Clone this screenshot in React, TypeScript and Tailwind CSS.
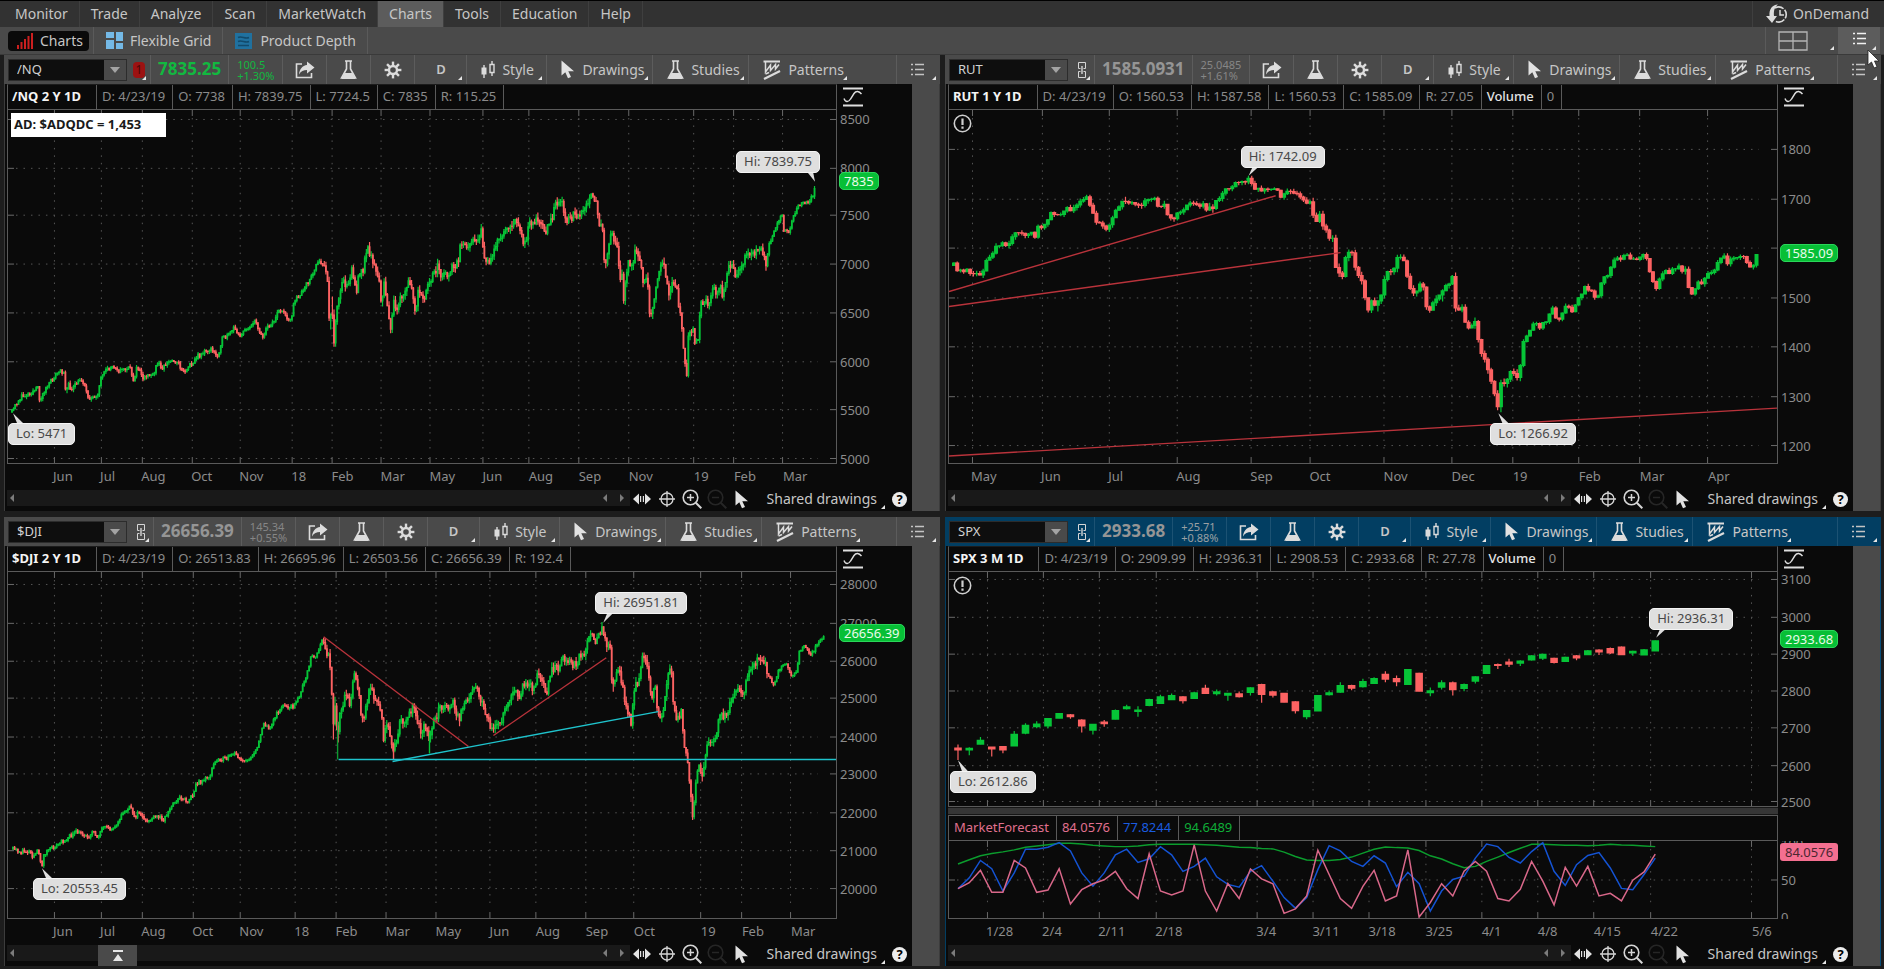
import type { ReactNode } from "react";

type Point = [number, number];

interface Label {
  at: number;
  text: string;
}

interface Callout {
  text: string;
  x: number;
  y: number;
  tip: Point;
}

interface TrendLine {
  from: Point;
  to: Point;
  color: string;
}

interface Bar {
  x: number;
  open: number;
  close: number;
  high: number;
  low: number;
}

const PLOT_WIDTH = 829;
const UP = "#06c437";
const DOWN = "#fc6262";
const RED_LINE = "#b9333b";
const CYAN_LINE = "#1fc3cc";

// price path of every chart as x,y pairs on the plot
const NQ_PATH =
  "4,303 8,295 13,288 20,285 30,279 32,292 36,282 43,272 50,263 56,262 58,284 60,275 64,281 68,275 74,270 78,280 81,289 85,290 90,283 93,270 98,262 103,258 108,257 111,262 116,260 122,259 126,272 128,260 132,260 135,272 140,265 146,267 149,253 155,258 160,253 166,251 171,255 176,263 180,258 190,247 196,243 203,240 210,247 214,230 220,227 226,219 233,226 240,218 248,212 252,222 255,227 260,217 268,210 270,200 276,203 283,212 286,195 290,187 295,183 300,173 305,165 309,155 313,153 319,162 321,190 322,220 324,187 326,234 329,203 331,193 335,172 340,175 344,158 349,183 351,168 356,158 359,140 361,140 364,148 366,153 369,167 372,170 374,197 376,173 380,197 383,217 386,193 389,205 393,190 398,182 402,170 405,187 407,203 411,183 416,193 421,177 426,162 430,157 433,165 440,165 445,158 450,155 453,138 458,138 465,127 468,131 472,125 474,123 476,145 480,153 486,147 490,130 493,128 498,117 505,118 509,112 512,115 515,132 519,127 521,115 526,109 531,113 538,120 543,113 548,97 551,89 555,93 559,112 563,108 568,102 571,108 578,97 585,87 589,93 591,112 596,120 597,153 600,145 603,122 606,130 610,140 612,167 615,163 616,191 619,163 622,150 625,160 629,137 633,153 636,173 640,163 642,203 646,198 648,183 651,167 656,148 659,170 662,190 665,173 669,177 672,200 675,220 677,243 680,266 681,223 686,217 688,233 691,228 693,198 698,192 701,195 706,175 710,188 713,177 716,187 720,163 725,155 728,167 733,157 738,148 745,143 754,138 759,152 762,135 768,120 775,105 777,122 782,123 786,108 790,98 796,93 803,90 807,83 809,72";

const DJI_PATH =
  "5,278 13,281 23,280 25,286 29,280 32,286 34,295 36,283 41,278 48,275 53,271 61,266 68,261 75,263 80,266 84,261 89,265 95,257 105,258 111,248 116,241 122,236 127,245 132,241 137,251 143,248 150,245 156,248 161,240 166,231 173,226 180,230 185,223 188,213 195,209 202,205 206,193 211,187 218,188 226,182 233,187 237,191 243,185 249,179 252,165 256,151 261,158 265,150 270,141 275,134 286,135 290,128 295,115 299,105 303,85 308,85 312,78 315,66 318,81 322,86 324,111 325,168 327,125 330,171 332,145 336,135 338,118 342,131 347,100 351,121 354,151 358,138 363,113 368,131 374,138 376,168 380,151 386,178 390,171 392,151 398,151 405,136 410,148 414,168 417,153 422,171 425,151 433,135 440,136 445,130 451,148 456,138 461,125 465,114 470,115 473,128 476,138 480,145 483,155 487,160 490,151 494,151 496,138 500,131 506,121 512,125 518,108 525,115 531,103 539,120 545,96 550,98 555,85 563,91 569,92 572,85 577,83 582,63 588,71 595,56 599,70 603,73 605,120 607,111 610,100 615,108 617,125 620,138 624,151 627,120 632,105 636,83 640,91 644,125 648,113 650,141 654,150 656,138 660,108 664,96 666,131 670,151 674,141 677,171 680,181 683,215 686,248 688,211 692,191 695,210 698,185 702,168 708,168 713,145 720,143 725,128 731,115 736,121 743,98 751,86 758,90 762,105 767,114 771,101 778,91 785,106 790,98 792,81 798,73 804,83 810,73 817,65";

const RUT_PATH =
  "5,156 9,163 13,161 19,159 24,167 29,162 33,167 35,155 40,147 47,137 54,135 57,138 62,128 70,121 74,126 85,125 87,127 89,115 92,120 99,110 104,102 109,104 119,100 127,98 132,93 137,86 140,95 144,100 146,110 152,115 157,118 160,115 165,107 170,97 175,87 179,93 184,95 192,99 199,89 207,89 210,98 215,91 220,107 224,112 229,103 237,98 245,93 254,95 257,102 260,93 263,103 267,93 272,90 275,79 282,78 289,74 295,72 302,69 305,76 310,80 320,80 329,79 332,86 339,83 343,79 347,85 354,86 356,93 361,93 364,100 367,110 371,105 375,117 377,123 384,128 386,150 389,165 394,167 398,140 403,143 405,153 410,167 415,173 418,202 423,188 427,202 430,193 434,180 438,165 444,163 449,150 455,147 458,163 462,177 467,187 472,175 476,177 479,203 484,193 490,187 493,192 495,175 502,172 505,163 507,197 514,200 516,213 522,217 525,210 527,213 530,230 533,247 538,248 540,263 545,277 547,293 551,303 552,273 557,270 564,263 567,260 569,272 572,257 574,237 579,223 584,217 589,215 591,220 595,215 600,207 604,198 607,208 612,210 617,198 624,202 630,190 637,178 644,180 646,188 651,183 654,170 660,167 665,152 672,148 680,143 684,150 690,149 697,143 699,155 703,167 706,177 710,177 713,163 722,162 730,156 735,165 739,157 741,184 745,182 749,175 754,175 759,163 767,159 774,148 777,148 780,157 784,148 797,147 799,155 806,158 809,145";

// SPX bars: direction, body top, body bottom, high, low (three units a pixel)
const SPX_BARS: [string, number, number, number, number][] = [
  ["d", 716, 722, 706, 752], ["u", 717, 722, 714, 738], ["u", 693, 705, 683, 705], ["d", 713, 719, 713, 742],
  ["d", 712, 722, 712, 732], ["u", 675, 710, 665, 710], ["u", 648, 672, 642, 675], ["u", 644, 652, 636, 657],
  ["u", 627, 650, 627, 657], ["u", 612, 627, 612, 627], ["d", 616, 622, 614, 628], ["d", 632, 650, 630, 670],
  ["u", 645, 663, 645, 676], ["d", 638, 643, 632, 652], ["u", 603, 630, 600, 630], ["u", 592, 598, 586, 600],
  ["u", 602, 606, 590, 622], ["u", 570, 588, 568, 590], ["u", 562, 582, 556, 582], ["u", 558, 571, 552, 571],
  ["d", 562, 574, 560, 582], ["u", 550, 567, 547, 567], ["d", 536, 552, 526, 552], ["u", 547, 553, 540, 558],
  ["u", 551, 557, 551, 574], ["d", 553, 562, 546, 564], ["u", 535, 549, 533, 558], ["d", 525, 555, 523, 580],
  ["d", 547, 557, 545, 564], ["d", 551, 578, 551, 578], ["d", 577, 604, 575, 612], ["u", 603, 622, 603, 630],
  ["u", 558, 605, 557, 605], ["u", 550, 556, 543, 558], ["u", 528, 548, 518, 550], ["d", 528, 536, 526, 542],
  ["u", 516, 532, 508, 534], ["u", 507, 522, 503, 522], ["d", 494, 509, 485, 518], ["d", 507, 517, 498, 530],
  ["u", 480, 525, 478, 525], ["d", 491, 545, 490, 545], ["u", 544, 550, 534, 560], ["u", 520, 533, 512, 540],
  ["d", 520, 541, 516, 558], ["u", 525, 537, 522, 545], ["u", 502, 515, 500, 522], ["u", 468, 492, 466, 492],
  ["d", 465, 468, 462, 478], ["d", 457, 464, 447, 472], ["u", 454, 461, 452, 469], ["u", 438, 451, 437, 453],
  ["u", 434, 446, 432, 451], ["d", 446, 459, 444, 462], ["u", 443, 456, 441, 456], ["d", 438, 445, 436, 452],
  ["u", 423, 435, 421, 436], ["d", 421, 427, 419, 436], ["d", 416, 430, 413, 433], ["d", 412, 435, 410, 436],
  ["u", 425, 430, 423, 438], ["u", 420, 436, 418, 436], ["u", 393, 424, 392, 424],
];

const FORECAST = [
  {
    color: "#d9688a",
    values: [1138, 1120, 1082, 1149, 1149, 1052, 1075, 1149, 1142, 1077, 1184, 1141, 1123, 1111, 1085, 1138, 1168, 1032, 1145, 1157, 1145, 1005, 1145, 1206, 1122, 1168, 1078, 1108, 1123, 1213, 1199, 1160, 1021, 1095, 1168, 1198, 1131, 1082, 1175, 1160, 1020, 1224, 1180, 1123, 1160, 1085, 1055, 1085, 1168, 1175, 1140, 1055, 1115, 1187, 1073, 1130, 1070, 1160, 1152, 1175, 1112, 1087, 1033],
  },
  {
    color: "#1453d3",
    values: [1138, 1105, 1052, 1077, 1145, 1090, 1018, 1018, 1012, 998, 1023, 1090, 1130, 1090, 1035, 1018, 1058, 1047, 1010, 1035, 1085, 1070, 1045, 1102, 1125, 1133, 1085, 1068, 1115, 1165, 1197, 1165, 1080, 1007, 1023, 1055, 1070, 1038, 1060, 1132, 1088, 1123, 1206, 1145, 1110, 1100, 1045, 1002, 1010, 1043, 1060, 1025, 998, 1085, 1128, 1065, 1037, 1028, 1075, 1137, 1141, 1095, 1045],
  },
  {
    color: "#0b9c2d",
    values: [1063, 1050, 1038, 1031, 1026, 1020, 1012, 1008, 1004, 1000, 1000, 1002, 1006, 1008, 1010, 1010, 1008, 1004, 1003, 1003, 1003, 1003, 1004, 1006, 1009, 1012, 1013, 1016, 1017, 1027, 1040, 1051, 1052, 1052, 1049, 1042, 1030, 1018, 1011, 1013, 1014, 1022, 1038, 1048, 1062, 1074, 1070, 1055, 1042, 1028, 1015, 1003, 1003, 1004, 1006, 1006, 1007, 1006, 1003, 1005, 1006, 1008, 1010],
  },
];

function parsePath(path: string): Point[] {
  return path.split(" ").map((pair) => pair.split(",").map(Number) as Point);
}

function heightAt(points: Point[], x: number) {
  for (let i = 1; i < points.length; i++) {
    const [x0, y0] = points[i - 1];
    const [x1, y1] = points[i];
    if (x <= x1) return y0 + ((y1 - y0) * (x - x0)) / (x1 - x0);
  }
  return points[points.length - 1][1];
}

// Daily bars along a price path, with a repeatable jitter
function makeBars(path: string, step: number, calm: number, rough: number, from: number, to = 760): Bar[] {
  const points = parsePath(path);
  const end = points[points.length - 1][0];
  let seed = 11;
  const random = () => {
    seed = (seed * 16807) % 2147483647;
    return seed / 2147483647;
  };
  const bars: Bar[] = [];
  let open = points[0][1];
  for (let x = points[0][0]; x <= end; x += step) {
    const size = x > from && x < to ? rough : calm;
    const close = heightAt(points, x) + (random() - 0.5) * size;
    // turning points that fall between two bars still reach the wick
    const passed = points.filter((p) => p[0] > x - step && p[0] <= x).map((p) => p[1]);
    bars.push({
      x,
      open,
      close,
      high: Math.min(open - random() * size * 0.6, close - random() * size * 0.6, ...passed),
      low: Math.max(open + random() * size * 0.6, close + random() * size * 0.6, ...passed),
    });
    open = close;
  }
  return bars;
}

const nqBars = makeBars(NQ_PATH, 1.62, 4.5, 9, 316);
const djiBars = makeBars(DJI_PATH, 1.62, 4, 9, 316);
const rutBars = makeBars(RUT_PATH, 3.24, 5, 7, 360, 570);
const spxBars = SPX_BARS.map(([dir, top, bottom, high, low], i) => ({
  x: 9 + i * 11.26,
  open: (dir === "u" ? bottom : top) / 3 - 62,
  close: (dir === "u" ? top : bottom) / 3 - 62,
  high: high / 3 - 62,
  low: low / 3 - 62,
}));

function labels(text: string): Label[] {
  return text.split(" ").map((part) => {
    const [name, at] = part.split(":");
    return { text: name, at: Number(at) };
  });
}

/* ---------- icons ---------- */

function ShareIcon() {
  return (
    <svg width="20" height="18" viewBox="0 0 20 18" fill="none" aria-hidden="true">
      <path d="M7 3H1.500v13.500h15V12" stroke="#dcdcdc" strokeWidth="1.6" />
      <path d="M12 0.500 19.500 6.500 12 12.500V9C8.500 9 6 10 4 13.500 4.500 8 7.500 4.500 12 4Z" fill="#dcdcdc" />
    </svg>
  );
}

function FlaskIcon() {
  return (
    <svg width="17" height="20" viewBox="0 0 17 20" fill="none" aria-hidden="true">
      <path d="M5 1h7M6.500 1v8L1.500 18h14L10.500 9V1" stroke="#dcdcdc" strokeWidth="1.6" />
      <path d="M4.500 13h8l3 6H1.500Z" fill="#dcdcdc" />
    </svg>
  );
}

function GearIcon() {
  return (
    <svg width="18" height="18" viewBox="0 0 18 18" fill="none" stroke="#dcdcdc" aria-hidden="true">
      <circle cx="9" cy="9" r="4" strokeWidth="2.4" />
      {[0, 45, 90, 135, 180, 225, 270, 315].map((a) => (
        <path key={a} d="M9 0.600V4.500" strokeWidth="2.4" transform={`rotate(${a} 9 9)`} />
      ))}
    </svg>
  );
}

function CandlesIcon() {
  return (
    <svg width="14" height="17" viewBox="0 0 14 17" fill="none" stroke="#dcdcdc" aria-hidden="true">
      <path d="M3 4v13M11 0v3M11 12v3" strokeWidth="1.4" />
      <path d="M0.500 6.500h5v7h-5Z" fill="#dcdcdc" stroke="none" />
      <path d="M9 3.500h4v8H9Z" strokeWidth="1.4" />
    </svg>
  );
}

function PointerIcon() {
  return (
    <svg width="14" height="19" viewBox="0 0 14 19" aria-hidden="true">
      <path d="M0.500 0.500V15.500L4.300 12.200 7 18.300 10 17 7.300 11.200H13Z" fill="#e2e2e2" />
    </svg>
  );
}

function PatternsIcon() {
  return (
    <svg width="18" height="20" viewBox="0 0 18 20" fill="none" stroke="#dcdcdc" aria-hidden="true">
      <path d="M0.500 1.500H17" strokeWidth="2" />
      <path d="M2.500 2v10L7.500 5v5.500L12.500 4.500V9L16 4.500" strokeWidth="1.5" />
      <path d="M1 19 17 11" strokeWidth="2.200" />
      <path d="M2.500 14 6 12.500" strokeWidth="1.5" />
    </svg>
  );
}

function ListIcon({ color = "#c4c4c4" }: { color?: string }) {
  return (
    <svg width="13" height="13" viewBox="0 0 13 13" fill="none" stroke={color} aria-hidden="true">
      <path d="M0 1.500h2M0 6.500h2M0 11.500h2M4 1.500h9M4 6.500h9M4 11.500h9" strokeWidth="1.4" />
    </svg>
  );
}

function LinkIcon() {
  return (
    <svg width="8" height="16" viewBox="0 0 8 16" fill="none" stroke="#d6d6d6" aria-hidden="true">
      <path d="M2.500 6.500H0.500V0.500h7v6H5.500M2.500 9.500H0.500v6h7v-6H5.500" />
      <path d="M4 4v8" strokeWidth="1.4" />
    </svg>
  );
}

function ScaleIcon() {
  return (
    <svg width="20" height="20" viewBox="0 0 20 20" fill="none" stroke="#dedede" aria-hidden="true">
      <path d="M0 1.500h20M0 18.500h20" strokeWidth="2.200" />
      <path d="M1 11.500c1.500 4 4.500 4 6.500 0.500l3.500-5.500c2-3 5-2.500 7.500 0.500" strokeWidth="1.4" />
    </svg>
  );
}

function AlertIcon() {
  return (
    <svg width="19" height="19" viewBox="0 0 19 19" fill="none" stroke="#cfcfcf" aria-hidden="true">
      <circle cx="9.500" cy="9.500" r="8.200" strokeWidth="1.6" />
      <path d="M9.500 4.500v6.500M9.500 12.500v2.200" strokeWidth="2.200" />
    </svg>
  );
}

function SpreadIcon() {
  return (
    <svg width="18" height="12" viewBox="0 0 18 12" aria-hidden="true">
      <path d="M0 6 6 0.500v11ZM18 6 12 0.500v11ZM7 3h1.200v6H7ZM9.800 3H11v6H9.800Z" fill="#e2e2e2" />
    </svg>
  );
}

function CrosshairIcon() {
  return (
    <svg width="16" height="16" viewBox="0 0 16 16" fill="none" stroke="#d6d6d6" aria-hidden="true">
      <circle cx="8" cy="8" r="6" strokeWidth="1.3" />
      <path d="M8 0v16M0 8h16" strokeWidth="1.3" />
    </svg>
  );
}

function ZoomIcon({ sign, color }: { sign: string; color: string }) {
  return (
    <svg width="20" height="20" viewBox="0 0 20 20" fill="none" stroke={color} aria-hidden="true">
      <circle cx="8.500" cy="8.500" r="7.300" strokeWidth="1.6" />
      <path d={sign} strokeWidth="1.5" />
      <path d="m13.800 13.800 5.500 5.500" strokeWidth="2" />
    </svg>
  );
}

function HelpIcon() {
  return (
    <span className="flex h-[15px] w-[15px] items-center justify-center rounded-full bg-[#ececec] text-[13px] leading-none font-bold text-black">
      ?
    </span>
  );
}

function Corner() {
  return (
    <svg className="absolute right-1 bottom-1" width="4" height="4" viewBox="0 0 4 4" aria-hidden="true">
      <path d="M4 0v4H0Z" fill="#e6e6e6" />
    </svg>
  );
}

/* ---------- toolbar ---------- */

interface ToolProps {
  label: string;
  width: string;
  icon?: ReactNode;
  text?: string;
  menu?: boolean;
  line: string;
}

function Tool({ label, width, icon, text, menu, line }: ToolProps) {
  return (
    <button
      type="button"
      aria-label={label}
      className={`relative flex h-full shrink-0 items-center border-l ${line} ${width} ${text ? "gap-[7px] pl-[14px]" : "justify-center"}`}
    >
      {icon}
      {text && <span>{text}</span>}
      {menu && <Corner />}
    </button>
  );
}

interface ToolbarProps {
  symbol: string;
  price: string;
  change: string;
  percent: string;
  live?: boolean;
  active?: boolean;
}

function Toolbar({ symbol, price, change, percent, live, active }: ToolbarProps) {
  const line = active ? "border-[#1c5273]" : "border-[#5c5c5c]";
  return (
    <div className={`flex h-[29px] items-center overflow-hidden pl-1 text-sm text-[#c6c6c6] ${active ? "bg-[#023e62]" : "bg-[#4a4a4a]"}`}>
      <div className="flex h-[22px] w-[119px] shrink-0 border border-[#2c2c2c] bg-[#0e0e0e]">
        <input
          aria-label={`Symbol ${symbol}`}
          defaultValue={symbol}
          className="min-w-0 flex-1 bg-transparent pl-2 text-[13px] text-[#d2d2d2] outline-none"
        />
        <button type="button" aria-label={`Choose symbol ${symbol}`} className="flex w-[22px] items-center justify-center bg-[#4a4a4a]">
          <svg width="10" height="6" viewBox="0 0 10 6" aria-hidden="true">
            <path d="M0 0h10L5 6Z" fill="#a4a4a4" />
          </svg>
        </button>
      </div>
      <button type="button" aria-label={`Link ${symbol}`} className={`relative flex h-full shrink-0 items-center ${live ? "w-[23px] pl-[6px]" : "w-[26px] pl-[10px]"}`}>
        {live ? (
          <span className="flex h-4 w-3 items-center justify-center rounded-sm bg-[#9c1212] text-xs leading-none text-[#4a0606]">1</span>
        ) : (
          <LinkIcon />
        )}
        <Corner />
      </button>
      <span className={`flex h-full shrink-0 items-center border-l px-[7px] text-[17px] font-bold ${line} ${live ? "text-[#12b840]" : "text-[#959595]"}`}>
        {price}
      </span>
      <span className={`flex h-full shrink-0 flex-col justify-center border-l px-2 text-[11px] leading-[11px] ${line} ${live ? "text-[#12b840]" : active ? "text-[#9aa0a4]" : "text-[#868686]"}`}>
        <span>{change}</span>
        <span>{percent}</span>
      </span>
      <Tool label="Share" width="w-11" icon={<ShareIcon />} line={line} />
      <Tool label="Edit studies" width="w-11" icon={<FlaskIcon />} line={line} />
      <Tool label="Chart settings" width="w-11" icon={<GearIcon />} line={line} />
      <Tool label="Time frame" width="w-[52px]" icon={<span className="text-[13px] font-semibold">D</span>} menu line={line} />
      <Tool label="Style" width="w-20" icon={<CandlesIcon />} text="Style" menu line={line} />
      <Tool label="Drawings" width="w-[106px]" icon={<PointerIcon />} text="Drawings" menu line={line} />
      <Tool label="Studies" width="w-24" icon={<FlaskIcon />} text="Studies" menu line={line} />
      <Tool label="Patterns" width="w-[103px]" icon={<PatternsIcon />} text="Patterns" menu line={line} />
      <button type="button" aria-label="Panel menu" className={`relative ml-auto flex h-full w-11 shrink-0 items-center border-l pl-[14px] ${line}`}>
        <ListIcon />
        <Corner />
      </button>
    </div>
  );
}

/* ---------- chart parts ---------- */

function InfoRow({ title, values, volume }: { title: string; values: string[]; volume?: boolean }) {
  const cell = "flex items-center border-r border-[#5a5a5a] pr-[7px] pl-[5px]";
  return (
    <div className="flex h-[26px] min-w-0 flex-1 overflow-hidden border border-[#5a5a5a] border-t-[#1c1c1c] text-[13px] whitespace-nowrap text-[#8a8a8a]">
      <h2 className="flex items-center border-r border-[#5a5a5a] pr-[15px] pl-1 font-bold text-[#f4f4f4]">{title}</h2>
      {values.map((value) => (
        <span key={value} className={cell}>
          {value}
        </span>
      ))}
      {volume && (
        <>
          <span className={`${cell} font-medium text-[#e4e4e4]`}>Volume</span>
          <span className={cell}>0</span>
        </>
      )}
    </div>
  );
}

function Grid({ times, levels, height }: { times: Label[]; levels: Label[]; height: number }) {
  return (
    <g fill="none">
      <g stroke="#565656" strokeWidth="1" strokeDasharray="1.500 6">
        {times.map((t) => (
          <path key={t.at} d={`M${t.at}.5 8V${height - 14}`} />
        ))}
        {levels.map((l) => (
          <path key={l.at} d={`M8 ${l.at}.5H811`} />
        ))}
      </g>
      <g stroke="#6a6a6a" strokeWidth="1">
        {times.map((t) => (
          <path key={t.at} d={`M${t.at}.5 0v6M${t.at}.5 ${height - 6}v6`} />
        ))}
        {levels.map((l) => (
          <path key={l.at} d={`M0 ${l.at}.5h6M823 ${l.at}.5h6`} />
        ))}
      </g>
    </g>
  );
}

function Bars({ bars, width }: { bars: Bar[]; width: number }) {
  const up = bars.filter((b) => b.close <= b.open);
  const down = bars.filter((b) => b.close > b.open);
  const wicks = (list: Bar[]) => list.map((b) => `M${b.x.toFixed(1)} ${b.high.toFixed(1)}V${b.low.toFixed(1)}`).join("");
  const bodies = (list: Bar[]) =>
    list.map((b) => `M${b.x.toFixed(1)} ${(Math.min(b.open, b.close) - 0.5).toFixed(1)}V${(Math.max(b.open, b.close) + 0.5).toFixed(1)}`).join("");
  return (
    <g fill="none">
      <path d={wicks(down)} stroke={DOWN} strokeWidth="1.2" />
      <path d={wicks(up)} stroke={UP} strokeWidth="1.2" />
      <path d={bodies(up)} stroke={UP} strokeWidth={width} />
      <path d={bodies(down)} stroke={DOWN} strokeWidth={width} />
    </g>
  );
}

function CalloutBox({ callout }: { callout: Callout }) {
  return (
    <span
      className="absolute flex h-[22px] items-center rounded-[5px] border border-[#f4f4f4] bg-[#dfdfdf] px-[7px] text-[13px] whitespace-nowrap text-[#484848]"
      style={{ left: `${(callout.x / PLOT_WIDTH) * 100}%`, top: callout.y }}
    >
      {callout.text}
    </span>
  );
}

function CalloutTail({ callout }: { callout: Callout }) {
  const [tx, ty] = callout.tip;
  const below = ty > callout.y;
  const edge = below ? callout.y + 21 : callout.y + 1;
  const lean = tx < callout.x + 40 ? 4 : -8;
  return <path d={`M${tx} ${ty}L${tx + lean} ${edge}H${tx + lean + 6}Z`} fill="#dfdfdf" />;
}

function AxisLabels({ levels }: { levels: Label[] }) {
  return (
    <>
      {levels.map((l) => (
        <span key={l.at} className="absolute left-[3px] -translate-y-1/2 text-[13px] leading-4 text-[#8c8c8c]" style={{ top: l.at }}>
          {l.text}
        </span>
      ))}
    </>
  );
}

interface PlotProps {
  height: number;
  times: Label[];
  levels: Label[];
  bars: Bar[];
  barWidth: number;
  lines?: TrendLine[];
  callouts: Callout[];
  badge: Label;
  children?: ReactNode;
}

function Plot({ height, times, levels, bars, barWidth, lines = [], callouts, badge, children }: PlotProps) {
  return (
    <div className="flex" style={{ height }}>
      <div className="relative min-w-0 flex-1 border-r border-b border-l border-[#5a5a5a]">
        <svg className="absolute inset-0 h-full w-full" viewBox={`0 0 ${PLOT_WIDTH} ${height}`} preserveAspectRatio="none" role="img" aria-label="Price chart">
          <Grid times={times} levels={levels} height={height} />
          <Bars bars={bars} width={barWidth} />
          {lines.map((line) => (
            <path key={line.from.join()} d={`M${line.from.join(" ")}L${line.to.join(" ")}`} stroke={line.color} strokeWidth="1.4" />
          ))}
          {callouts.map((c) => (
            <CalloutTail key={c.text} callout={c} />
          ))}
        </svg>
        {callouts.map((c) => (
          <CalloutBox key={c.text} callout={c} />
        ))}
        {children}
      </div>
      <div className="relative w-[75px]">
        <AxisLabels levels={levels} />
        <span
          className="absolute left-[2px] flex h-[18px] -translate-y-1/2 items-center rounded-[5px] border border-[#2bd65a] bg-[#07bf36] px-1 text-[13px] leading-none text-[#eafbea]"
          style={{ top: badge.at }}
        >
          {badge.text}
        </span>
      </div>
    </div>
  );
}

function TimeAxis({ times }: { times: Label[] }) {
  return (
    <div className="mr-[75px] h-[26px]">
      <div className="relative h-full text-[13px] text-[#8c8c8c]">
        {times.map((t) => (
          <span key={t.at} className="absolute top-[3px] leading-[18px]" style={{ left: `${(t.at / PLOT_WIDTH) * 100}%` }}>
            {t.text}
          </span>
        ))}
      </div>
    </div>
  );
}

function Arrow({ flip }: { flip?: boolean }) {
  return (
    <svg width="4" height="8" viewBox="0 0 4 8" aria-hidden="true">
      <path d={flip ? "M0 0v8L4 4Z" : "M4 0v8L0 4Z"} fill="#7c7c7c" />
    </svg>
  );
}

function BottomBar({ dock }: { dock?: boolean }) {
  return (
    <div className="flex h-[21px] text-sm text-[#c6c6c6]">
      <div className="relative flex h-4 min-w-0 flex-1 items-center gap-[13px] bg-[#191919] pr-[6px] pl-[3px]">
        <button type="button" aria-label="Scroll to start" className="mr-auto">
          <Arrow />
        </button>
        <button type="button" aria-label="Scroll left">
          <Arrow />
        </button>
        <button type="button" aria-label="Scroll right">
          <Arrow flip />
        </button>
        {dock && (
          <button type="button" aria-label="Open dock" className="absolute top-0 left-[91px] flex h-[21px] w-[39px] items-center justify-center bg-[#4a4a4a]">
            <svg width="10" height="11" viewBox="0 0 10 11" aria-hidden="true">
              <path d="M0 0h10v2H0ZM5 4l5 7H0Z" fill="#e6e6e6" />
            </svg>
          </button>
        )}
      </div>
      <div className="flex h-[18px] items-center pr-[5px]">
        <button type="button" aria-label="Expand area" className="flex w-[25px] justify-center">
          <SpreadIcon />
        </button>
        <button type="button" aria-label="Crosshair" className="flex w-[25px] justify-center">
          <CrosshairIcon />
        </button>
        <button type="button" aria-label="Zoom in" className="flex w-[25px] justify-center">
          <ZoomIcon sign="M5 8.500h7M8.500 5v7" color="#d6d6d6" />
        </button>
        <button type="button" aria-label="Zoom out" className="flex w-[25px] justify-center">
          <ZoomIcon sign="M5 8.500h7" color="#262626" />
        </button>
        <button type="button" aria-label="Pointer" className="flex w-[25px] justify-center">
          <PointerIcon />
        </button>
        <button type="button" className="relative h-5 pr-2 pl-3 leading-[18px] whitespace-nowrap">
          Shared drawings
          <svg className="absolute right-0 bottom-0" width="4" height="4" viewBox="0 0 4 4" aria-hidden="true">
            <path d="M4 0v4H0Z" fill="#e6e6e6" />
          </svg>
        </button>
        <button type="button" aria-label="Help" className="pl-[7px]">
          <HelpIcon />
        </button>
      </div>
    </div>
  );
}

interface PanelProps {
  toolbar: ReactNode;
  title: string;
  values: string[];
  volume?: boolean;
  times: Label[];
  active?: boolean;
  dock?: boolean;
  children: ReactNode;
}

function Panel({ toolbar, title, values, volume, times, active, dock, children }: PanelProps) {
  return (
    <section aria-label={title} className="min-w-0">
      {toolbar}
      <div className="flex">
        <div className={`min-w-0 flex-1 border-l bg-[#0a0a0a] pl-[2px] ${active ? "border-[#023e62]" : "border-[#3c3c3c]"}`}>
          <div className="flex">
            <InfoRow title={title} values={values} volume={volume} />
            <button type="button" aria-label="Axis scale" className="flex w-[75px] items-start pt-[3px] pl-[6px]">
              <ScaleIcon />
            </button>
          </div>
          {children}
          <TimeAxis times={times} />
          <BottomBar dock={dock} />
        </div>
        <div className={`w-7 border-r bg-[#4a4a4a] ${active ? "border-[#0a4d78]" : "border-[#3c3c3c]"}`} />
      </div>
    </section>
  );
}

function Forecast({ times }: { times: Label[] }) {
  const readings = [
    ["MarketForecast", "text-[#e0708f]"],
    ["84.0576", "text-[#e0708f]"],
    ["77.8244", "text-[#1a5ce0]"],
    ["94.6489", "text-[#0fae38]"],
  ];
  return (
    <>
      <div className="mr-[75px] h-2 border-y border-[#161616] bg-[#363636]" />
      <div className="mr-[75px] flex h-[26px] overflow-hidden border border-[#5a5a5a] text-[13px]">
        {readings.map(([text, color]) => (
          <span key={text} className={`flex items-center border-r border-[#5a5a5a] pr-[7px] pl-[5px] ${color}`}>
            {text}
          </span>
        ))}
      </div>
      <div className="flex h-[78px]">
        <div className="relative min-w-0 flex-1 border-r border-b border-l border-[#5a5a5a]">
          <svg className="absolute inset-0 h-full w-full" viewBox={`0 0 ${PLOT_WIDTH} 78`} preserveAspectRatio="none" role="img" aria-label="MarketForecast chart">
            <Grid times={times} levels={[{ at: 39, text: "50" }]} height={78} />
            {[FORECAST[2], FORECAST[1], FORECAST[0]].map((series) => (
              <polyline
                key={series.color}
                fill="none"
                stroke={series.color}
                strokeWidth="1.5"
                points={series.values.map((v, i) => `${(9 + i * 11.26).toFixed(1)},${(v / 3 - 331).toFixed(1)}`).join(" ")}
              />
            ))}
          </svg>
        </div>
        <div className="relative w-[75px] overflow-hidden">
          <AxisLabels levels={labels("100:2 50:39 0:76")} />
          <span className="absolute top-[2px] left-[2px] flex h-[18px] items-center rounded-[3px] bg-[#f46f90] px-[5px] text-[13px] leading-none text-[#4a2630]">
            84.0576
          </span>
        </div>
      </div>
    </>
  );
}

/* ---------- page ---------- */

const nqTimes = labels("Jun:46 Jul:93 Aug:134 Oct:184 Nov:232 18:284 Feb:324 Mar:373 May:422 Jun:475 Aug:521 Sep:571 Nov:621 19:686 Feb:726 Mar:775");
const djiTimes = labels("Jun:46 Jul:93 Aug:134 Oct:185 Nov:232 18:287 Feb:328 Mar:378 May:428 Jun:482 Aug:528 Sep:578 Oct:626 19:693 Feb:734 Mar:783");
const rutTimes = labels("May:23 Jun:93 Jul:160 Aug:228 Sep:302 Oct:361 Nov:435 Dec:503 19:564 Feb:630 Mar:691 Apr:759");
const spxTimes = labels("1/28:38 2/4:94 2/11:150 2/18:207 3/4:308 3/11:364 3/18:420 3/25:477 4/1:533 4/8:589 4/15:645 4/22:702 5/6:803");

const MENU = ["Monitor", "Trade", "Analyze", "Scan", "MarketWatch", "Charts", "Tools", "Education", "Help"];

function MenuBar() {
  return (
    <nav className="flex h-[26px] items-stretch bg-[#323232] pl-1 text-sm text-[#c6c6c6]">
      {MENU.map((item) => (
        <a key={item} href="#" className={`flex items-center border-r border-[#3f3f3f] px-[11px] ${item === "Charts" ? "bg-[#5c5c5c]" : ""}`}>
          {item}
        </a>
      ))}
      <button type="button" className="mr-1 ml-auto flex items-center gap-[5px] border-l border-[#3f3f3f] pr-[11px] pl-[13px]">
        <svg width="22" height="20" viewBox="0 0 22 20" fill="none" stroke="#dcdcdc" aria-hidden="true">
          <path d="M9 4a7.500 7.500 0 1 1 0 13" strokeWidth="1.6" strokeDasharray="9 1.500" />
          <path d="M14 6v5h4" strokeWidth="1.5" />
          <path d="M12 0.500C6 1 3 5 3.500 12H0l6 7 5-7H8C7.500 7 8.500 3 12 0.500Z" fill="#dcdcdc" stroke="none" />
        </svg>
        OnDemand
      </button>
    </nav>
  );
}

function TabBar() {
  return (
    <div className="flex h-[27px] items-stretch bg-[#4a4a4a] pl-1 text-sm text-[#c6c6c6]">
      <div className="flex items-center border-r border-[#5a5a5a] pr-1 pl-1">
        <button type="button" className="flex h-5 items-center gap-[7px] rounded-[4px] bg-[#0a0a0a] pr-[6px] pl-[9px]">
          <svg width="16" height="16" viewBox="0 0 16 16" aria-hidden="true">
            <path d="M0 12h2v4H0ZM3.500 9h2v7h-2ZM7 6h2v10H7ZM10.500 3h2v13h-2ZM14 0h2v16h-2Z" fill="#cc1f1f" />
          </svg>
          Charts
        </button>
      </div>
      <button type="button" className="flex items-center gap-[7px] border-r border-[#5a5a5a] pr-[11px] pl-3">
        <svg width="17" height="17" viewBox="0 0 17 17" aria-hidden="true">
          <path d="M0 0h8v6H0ZM0 8h8v9H0ZM10 0h7v9h-7ZM10 11h7v6h-7Z" fill="#74b9e6" />
        </svg>
        Flexible Grid
      </button>
      <button type="button" className="flex items-center gap-2 border-r border-[#5a5a5a] pr-[11px] pl-3">
        <svg width="17" height="16" viewBox="0 0 17 16" fill="none" aria-hidden="true">
          <path d="M0 0h17v16H0Z" fill="#20719f" />
          <path d="M3 4.500c4-2 7 2 11 0M3 8.500c4-2 7 2 11 0M3 12.500h11" stroke="#124a6b" strokeWidth="1.4" />
        </svg>
        Product Depth
      </button>
      <button type="button" aria-label="Grid layout" className="relative ml-auto flex w-[73px] items-center border-l border-[#5a5a5a] pl-3">
        <svg width="30" height="20" viewBox="0 0 30 20" fill="none" stroke="#b4b4b4" aria-hidden="true">
          <path d="M1 1h28v18H1ZM15 1v18M1 10h28" strokeWidth="1.3" />
        </svg>
        <Corner />
      </button>
      <button type="button" aria-label="Layout menu" className="relative mr-1 flex w-[42px] items-center bg-[#5c5c5c] pb-1 pl-[15px]">
        <ListIcon color="#f2f2f2" />
        <Corner />
      </button>
    </div>
  );
}

export default function App() {
  return (
    <main className="relative min-h-screen w-full bg-[#1d1d1d] font-['Noto_Sans','Open_Sans',sans-serif]">
      <div className="h-px bg-black" />
      <MenuBar />
      <TabBar />
      <div className="grid grid-cols-2 gap-x-[5px] gap-y-[6px] border-t border-[#3a3a3a] pr-[3px] pl-1">
        <Panel
          title="/NQ 2 Y 1D"
          values={["D: 4/23/19", "O: 7738", "H: 7839.75", "L: 7724.5", "C: 7835", "R: 115.25"]}
          times={nqTimes}
          toolbar={<Toolbar symbol="/NQ" price="7835.25" change="100.5" percent="+1.30%" live />}
        >
          <Plot
            height={354}
            times={nqTimes}
            levels={labels("8500:9 8000:58 7500:105 7000:154 6500:203 6000:252 5500:300 5000:349")}
            bars={nqBars}
            barWidth={1.8}
            callouts={[
              { text: "Hi: 7839.75", x: 729, y: 41, tip: [808, 72] },
              { text: "Lo: 5471", x: 0, y: 313, tip: [5, 304] },
            ]}
            badge={{ text: "7835", at: 71 }}
          >
            <span className="absolute top-[3px] left-[3px] flex h-6 w-[155px] items-center bg-white pl-[3px] text-[13px] font-bold text-[#1a1a1a]">
              AD: $ADQDC = 1,453
            </span>
          </Plot>
        </Panel>

        <Panel
          title="RUT 1 Y 1D"
          values={["D: 4/23/19", "O: 1560.53", "H: 1587.58", "L: 1560.53", "C: 1585.09", "R: 27.05"]}
          volume
          times={rutTimes}
          toolbar={<Toolbar symbol="RUT" price="1585.0931" change="25.0485" percent="+1.61%" />}
        >
          <Plot
            height={354}
            times={rutTimes}
            levels={labels("1800:39 1700:89 1600:138 1500:188 1400:237 1300:287 1200:336")}
            bars={rutBars}
            barWidth={4}
            lines={[
              { from: [0, 182], to: [327, 86], color: RED_LINE },
              { from: [0, 197], to: [392, 143], color: RED_LINE },
              { from: [0, 347], to: [829, 299], color: RED_LINE },
            ]}
            callouts={[
              { text: "Hi: 1742.09", x: 292, y: 36, tip: [300, 66] },
              { text: "Lo: 1266.92", x: 542, y: 313, tip: [550, 304] },
            ]}
            badge={{ text: "1585.09", at: 143 }}
          >
            <span className="absolute top-1 left-[4px]">
              <AlertIcon />
            </span>
          </Plot>
        </Panel>

        <Panel
          title="$DJI 2 Y 1D"
          values={["D: 4/23/19", "O: 26513.83", "H: 26695.96", "L: 26503.56", "C: 26656.39", "R: 192.4"]}
          times={djiTimes}
          dock
          toolbar={<Toolbar symbol="$DJI" price="26656.39" change="145.34" percent="+0.55%" />}
        >
          <Plot
            height={347}
            times={djiTimes}
            levels={labels("28000:12 27000:51 26000:89 25000:126 24000:165 23000:202 22000:241 21000:279 20000:317")}
            bars={djiBars}
            barWidth={1.8}
            lines={[
              { from: [330, 150], to: [330, 188], color: "#0c9a30" },
              { from: [386, 172], to: [386, 188], color: DOWN },
              { from: [422, 160], to: [422, 182], color: UP },
              { from: [316, 65], to: [461, 175], color: RED_LINE },
              { from: [486, 164], to: [599, 86], color: RED_LINE },
              { from: [331, 188], to: [829, 188], color: CYAN_LINE },
              { from: [385, 190], to: [651, 140], color: CYAN_LINE },
            ]}
            callouts={[
              { text: "Hi: 26951.81", x: 588, y: 20, tip: [596, 51] },
              { text: "Lo: 20553.45", x: 25, y: 306, tip: [34, 297] },
            ]}
            badge={{ text: "26656.39", at: 61 }}
          />
        </Panel>

        <Panel
          title="SPX 3 M 1D"
          values={["D: 4/23/19", "O: 2909.99", "H: 2936.31", "L: 2908.53", "C: 2933.68", "R: 27.78"]}
          volume
          active
          times={spxTimes}
          toolbar={<Toolbar symbol="SPX" price="2933.68" change="+25.71" percent="+0.88%" active />}
        >
          <Plot
            height={235}
            times={spxTimes}
            levels={labels("3100:7 3000:45 2900:82 2800:119 2700:156 2600:194 2500:230")}
            bars={spxBars}
            barWidth={7.6}
            callouts={[
              { text: "Hi: 2936.31", x: 701, y: 36, tip: [708, 66] },
              { text: "Lo: 2612.86", x: 1, y: 199, tip: [9, 189] },
            ]}
            badge={{ text: "2933.68", at: 67 }}
          >
            <span className="absolute top-1 left-[4px]">
              <AlertIcon />
            </span>
          </Plot>
          <Forecast times={spxTimes} />
        </Panel>
      </div>

      <svg className="absolute top-[49px] right-1" width="13" height="20" viewBox="0 0 13 20" aria-hidden="true">
        <path d="M1 1V16L4.500 13 7 19 10 17.800 7.500 12H12Z" fill="#fff" stroke="#222" strokeWidth="0.800" />
      </svg>
    </main>
  );
}
